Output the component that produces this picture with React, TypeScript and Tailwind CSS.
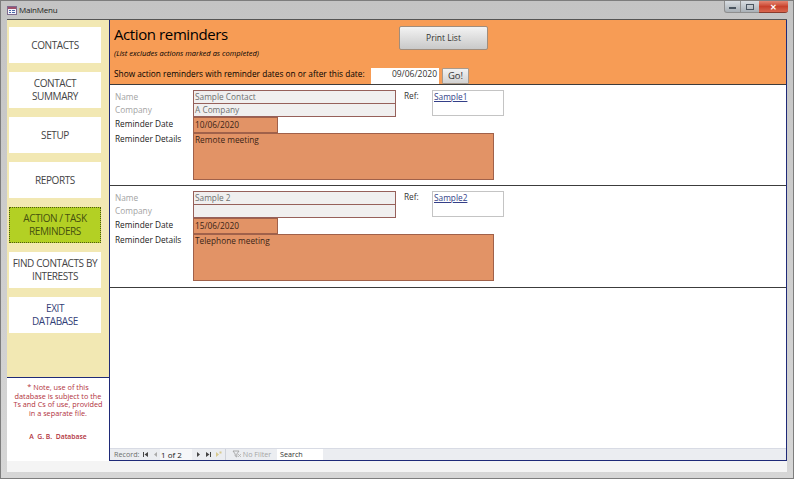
const FONT = "font-['Open_Sans','Noto_Sans',sans-serif]";

const MENU_ITEMS = [
  { label: ["CONTACTS"], tone: "plain" },
  { label: ["CONTACT", "SUMMARY"], tone: "plain" },
  { label: ["SETUP"], tone: "plain" },
  { label: ["REPORTS"], tone: "plain" },
  { label: ["ACTION / TASK", "REMINDERS"], tone: "active" },
  { label: ["FIND CONTACTS BY", "INTERESTS"], tone: "plain" },
  { label: ["EXIT", "DATABASE"], tone: "exit" },
];

const REMINDERS = [
  {
    name: "Sample Contact",
    company: "A Company",
    date: "10/06/2020",
    details: "Remote meeting",
    ref: "Sample1",
  },
  {
    name: "Sample 2",
    company: "",
    date: "15/06/2020",
    details: "Telephone meeting",
    ref: "Sample2",
  },
];

function MenuButton({ label, tone }: { label: string[]; tone: string }) {
  const toneClass =
    tone === "active"
      ? "bg-[#b3d024] border border-dotted border-[#4d5a10] text-[#46500f]"
      : tone === "exit"
        ? "bg-white text-[#343f78]"
        : "bg-white text-[#444444]";

  return (
    <div
      className={`flex h-[36px] w-[92px] flex-col items-center justify-center text-[10px] leading-[13px] tracking-[-0.4px] ${toneClass}`}
    >
      {label.map((line) => (
        <span key={line} className="whitespace-nowrap">
          {line}
        </span>
      ))}
    </div>
  );
}

function Sidebar() {
  return (
    <aside className="flex w-[102px] shrink-0 flex-col bg-white">
      <div className="flex h-[357px] flex-col gap-[9px] bg-[#f2e8b3] pl-[2px] pt-[7px]">
        {MENU_ITEMS.map((item) => (
          <MenuButton key={item.label[0]} label={item.label} tone={item.tone} />
        ))}
      </div>
      <div className="border-t border-[#1f2a78] pt-[5px] text-center text-[7.3px] leading-[8.7px] text-[#b2323c]">
        <p>* Note, use of this</p>
        <p>database is subject to the</p>
        <p>Ts and Cs of use, provided</p>
        <p>in a separate file.</p>
        <p className="mt-[15px] text-[6.8px] font-semibold whitespace-pre">A  G. B.  Database</p>
      </div>
    </aside>
  );
}

function Header() {
  return (
    <header className="flex h-[65px] shrink-0 flex-col border-b border-[#3c3c3c] bg-[#f79c55] pl-[4px] text-black">
      <div className="flex h-[48px] items-start">
        <div className="w-[285px]">
          <h1 className="pt-[2px] text-[15px] leading-[24px] tracking-[-0.4px]">Action reminders</h1>
          <p className="mt-[2px] text-[7.5px] leading-[10px] italic">
            (List excludes actions marked as completed)
          </p>
        </div>
        <button className="mt-[6px] h-[24px] w-[89px] rounded-[2px] border border-[#a08d7c] bg-gradient-to-b from-[#f3f3f3] to-[#c9c9c9] text-[8.5px] font-medium text-[#333333]">
          Print List
        </button>
      </div>
      <div className="flex h-[16px] items-center">
        <span className="w-[257px] pb-[3px] text-[8.3px] whitespace-nowrap">
          Show action reminders with reminder dates on or after this date:
        </span>
        <div className="flex h-[16px] w-[68px] items-center justify-end bg-white pb-[3px] pr-[2px] text-[8.5px] text-[#333333]">
          09/06/2020
        </div>
        <button className="ml-[3px] h-[16px] w-[27px] rounded-[1px] border border-[#a89a8c] bg-gradient-to-b from-[#f2f2f2] to-[#d2d2d2] text-[9.5px] text-[#333333]">
          Go!
        </button>
      </div>
    </header>
  );
}

function ReminderRow({ name, company, date, details, ref: refName }: (typeof REMINDERS)[number]) {
  const greyField =
    "h-[14px] w-[203px] border border-[#96605a] bg-[#f0efef] pl-[1px] text-[8.3px] leading-[12px] text-[#6f6f6f]";
  const orangeField = "border border-[#a0614a] bg-[#e29366] pl-[1px] text-[8.3px] text-[#3a2416]";

  return (
    <section className="flex h-[102px] shrink-0 border-b border-[#3c3c3c] pl-[5px] pt-[5px] text-[8.3px] first-of-type:h-[101px]">
      <div className="flex w-[78px] flex-col leading-[13px]">
        <span className="text-[#a3a3a3]">Name</span>
        <span className="text-[#a3a3a3]">Company</span>
        <span className="mt-[1px] text-[#222222]">Reminder Date</span>
        <span className="mt-[2px] text-[#222222]">Reminder Details</span>
      </div>
      <div className="flex w-[211px] flex-col">
        <div className={greyField}>{name}</div>
        <div className={`${greyField} -mt-px`}>{company}</div>
        <div className={`${orangeField} h-[16px] w-[85px] leading-[13px]`}>{date}</div>
        <div className={`${orangeField} h-[47px] w-[301px] leading-[12px]`}>{details}</div>
      </div>
      <span className="w-[28px] font-medium leading-[11px] text-[#333333]">Ref:</span>
      <div className="h-[26px] w-[72px] border border-[#c4c4c4] bg-white pl-[1px] text-[8.3px] leading-[12px] text-[#343f88] underline">
        {refName}
      </div>
    </section>
  );
}

function NavArrow({ d, fill = "#444444", className = "" }: { d: string; fill?: string; className?: string }) {
  return (
    <svg width="6" height="7" viewBox="0 0 6 7" className={`shrink-0 ${className}`}>
      <path d={d} fill={fill} />
    </svg>
  );
}

function NavBar() {
  return (
    <div className="flex h-[12px] shrink-0 items-center border-t border-[#d8dbe4] bg-[#ebedf1] pl-[4px] text-[7.2px] text-[#6d6d6d]">
      <span className="w-[28px]">Record:</span>
      <NavArrow d="M0 1h1v5H0zM5 1v5L1.5 3.5z" className="ml-[1px]" />
      <NavArrow d="M4 1v5L1 3.5z" fill="#aaaaaa" className="ml-[4px]" />
      <div className="ml-[1px] flex h-full w-[32px] items-center bg-[#f6f7f9] pl-[1px] text-[8px] text-[#222222]">
        1 of 2
      </div>
      <NavArrow d="M1 1v5l3-2.5z" className="ml-[4px]" />
      <NavArrow d="M0 1v5l3.5-2.5zM4 1h1v5H4z" className="ml-[4px]" />
      <NavArrow d="M0 1v5l3-2.5zM3.5 0.5h2v2h-2z" fill="#d8c98f" className="ml-[4px]" />
      <span className="ml-[3px] h-full w-px bg-[#cfd2d9]" />
      <span className="flex w-[51px] items-center justify-center gap-[2px] text-[#a5a5a5]">
        <svg width="9" height="8" viewBox="0 0 9 8">
          <path d="M1 1h6L4.8 4v3L3.2 6V4z" fill="none" stroke="#9a9a9a" strokeWidth="0.8" />
          <path d="M6 4l3 3M9 4L6 7" stroke="#b0b0b0" strokeWidth="0.8" />
        </svg>
        No Filter
      </span>
      <div className="flex h-full w-[46px] items-center bg-white pl-[3px] text-[#333333]">Search</div>
    </div>
  );
}

function WindowButtons() {
  return (
    <div className="flex h-[12px] items-stretch self-start">
      <div className="flex w-[17px] items-center justify-center rounded-bl-[3px] border border-t-0 border-[#8e8e8e] bg-gradient-to-b from-[#d8dde2] to-[#a9b0b6]">
        <span className="mt-[3px] h-[2px] w-[7px] bg-[#4a5560]" />
      </div>
      <div className="flex w-[18px] items-center justify-center border-b border-[#8e8e8e] bg-gradient-to-b from-[#d8dde2] to-[#a9b0b6]">
        <span className="h-[6px] w-[8px] border border-[#4a5560]" />
      </div>
      <div className="flex w-[29px] items-center justify-center rounded-br-[3px] border-b border-[#8a3a2c] bg-gradient-to-b from-[#e48672] via-[#c8412c] to-[#d8664e] text-[8px] font-bold leading-none text-white">
        ✕
      </div>
    </div>
  );
}

export default function App() {
  return (
    <div
      className={`flex h-[479px] w-[794px] flex-col overflow-hidden border border-[#7d7d7d] bg-gradient-to-b from-[#c4c4c4] to-[#d6d6d6] ${FONT}`}
    >
      <div className="flex h-[18px] shrink-0 items-center justify-between pl-[6px] pr-[5px]">
        <div className="flex items-center gap-[2px] text-[8px] tracking-[-0.2px] text-[#222222]">
          <svg width="10" height="9" viewBox="0 0 10 9">
            <rect x="0.5" y="0.5" width="9" height="8" fill="#f4f4fa" stroke="#7f6a8e" />
            <rect x="1" y="1" width="8" height="2" fill="#a0506a" />
            <rect x="2" y="4" width="2" height="1" fill="#4a66a8" />
            <rect x="5" y="4" width="3" height="1" fill="#4a66a8" />
            <rect x="2" y="6" width="2" height="1" fill="#4a66a8" />
            <rect x="5" y="6" width="3" height="1" fill="#4a66a8" />
          </svg>
          <span>MainMenu</span>
        </div>
        <WindowButtons />
      </div>

      <div className="mx-[6px] flex h-[442px] shrink-0 border-t border-[#555555] bg-white">
        <Sidebar />
        <main className="flex min-w-0 flex-1 flex-col border-x border-b border-[#1f2a78]">
          <Header />
          {REMINDERS.map((reminder) => (
            <ReminderRow key={reminder.ref} {...reminder} />
          ))}
          <div className="flex-1 bg-white" />
          <NavBar />
        </main>
      </div>

      <div className="mx-[6px] h-[11px] shrink-0 bg-[#f4f4f4]" />
    </div>
  );
}
